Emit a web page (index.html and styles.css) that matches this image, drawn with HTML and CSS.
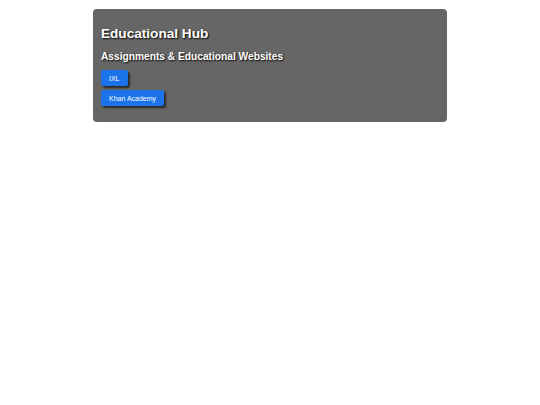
FILE: index.html
```html
<!DOCTYPE html>
<html lang="en">
<head>
  <meta charset="UTF-8">
  <title>Educational Hub</title>
  <link rel="stylesheet" href="styles.css">
</head>
<body>

  <!-- Main card -->
  <div class="hub">
    <h1>Educational Hub</h1>
    <h2>Assignments &amp; Educational Websites</h2>
    <div class="links">
      <button class="site-btn">IXL</button>
      <button class="site-btn">Khan Academy</button>
    </div>
  </div>

</body>
</html>
```

FILE: styles.css
```css
body {
  background-color: white;
  font-family: "Liberation Sans", Arial, sans-serif;
  margin: 0;
  padding-top: 9px;
}

.hub {
  background-color: #666;
  color: white;
  width: 354px;
  margin: 0 auto;
  padding: 16px 8px 16px;
  box-sizing: border-box;
  border-radius: 4px;
  text-shadow: 1px 1px 2px #000;
}

h1 {
  font-size: 13.6px;
  line-height: 17px;
  margin: 0 0 8px;
}

h2 {
  font-size: 10.2px;
  line-height: 13px;
  margin: 0 0 7px;
}

.links {
  display: flex;
  flex-direction: column;
  align-items: flex-start;
  gap: 4px;
}

.site-btn {
  background-color: #1a73e8;
  color: white;
  border: none;
  border-radius: 2px;
  font-family: "Liberation Sans", Arial, sans-serif;
  font-size: 7px;
  padding: 5px 8px;
  height: 16px;
  box-shadow: 2px 2px 2px rgba(0, 0, 0, 0.6);
  text-shadow: none;
}
```
